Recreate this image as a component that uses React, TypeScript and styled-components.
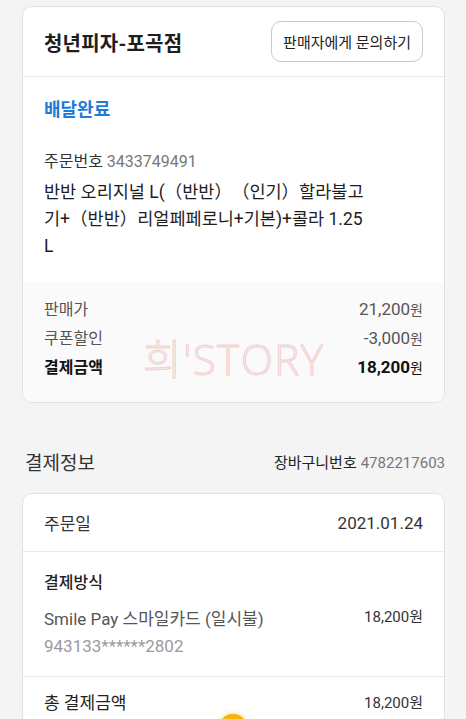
import styled, { createGlobalStyle } from 'styled-components';

const GlobalStyle = createGlobalStyle`
    html, body {
        margin: 0;
        padding: 0;
        background: #f4f4f4;
    }
    body {
        font-family: Roboto, "Noto Sans CJK KR", sans-serif;
        color: #222;
        -webkit-font-smoothing: antialiased;
    }
`;

const Page = styled.div`
    padding: 6px 21px 0 22px;
    position: relative;
    min-height: 719px;
    box-sizing: border-box;
    overflow: hidden;
`;

const Card = styled.section`
    background: #fff;
    border: 1px solid #e2e2e2;
    border-radius: 10px;
    overflow: hidden;
    position: relative;
`;

const CardHeader = styled.div`
    display: flex;
    align-items: center;
    justify-content: space-between;
    height: 69px;
    padding: 0 21px 0 21px;
    border-bottom: 1px solid #e8e8e8;
`;

const StoreName = styled.h1`
    margin: 2px 0 0;
    font-size: 20px;
    font-weight: 700;
    color: #1e1e1e;
    letter-spacing: 0.2px;
`;

const AskButton = styled.button`
    height: 41px;
    padding: 0 11px;
    background: #fff;
    border: 1px solid #c9c9c9;
    border-radius: 10px;
    font-family: inherit;
    font-size: 15px;
    color: #222;
`;

const OrderBody = styled.div`
    padding: 20px 21px 22px;
`;

const Status = styled.div`
    font-size: 18px;
    font-weight: 700;
    line-height: 26px;
    color: #1f7bd6;
`;

const OrderNo = styled.div`
    margin-top: 27px;
    font-size: 16px;
    line-height: 24px;
    color: #333;
    & span {
        color: #777;
    }
`;

const ProductName = styled.p`
    margin: 5px 0 0;
    width: 324px;
    font-size: 17.5px;
    line-height: 27px;
    color: #1e1e1e;
    word-break: break-all;
    text-spacing-trim: space-all;
`;

const PriceBox = styled.div`
    background: #fafafa;
    padding: 13px 21px 18px;
    position: relative;
`;

const PriceRow = styled.div<{ $strong?: boolean }>`
    display: flex;
    justify-content: space-between;
    align-items: baseline;
    height: ${(p) => (p.$strong ? '31px' : '29px')};
    line-height: 29px;
    font-size: 16px;
    color: ${(p) => (p.$strong ? '#111' : '#555')};
    font-weight: ${(p) => (p.$strong ? 700 : 400)};
`;

const Amount = styled.span`
    font-size: 17px;
    & small {
        font-size: 14px;
        font-weight: 400;
    }
`;

const Watermark = styled.div`
    position: absolute;
    left: 120px;
    top: 44px;
    font-size: 42px;
    font-family: "Open Sans", "Noto Sans CJK KR", sans-serif;
    font-weight: 300;
    color: rgba(250, 225, 225, 0.5);
    -webkit-text-stroke: 1px rgba(225, 150, 150, 0.4);
    letter-spacing: 1.5px;
    pointer-events: none;
`;

const SectionHead = styled.div`
    display: flex;
    justify-content: space-between;
    align-items: center;
    margin: 43px 0 17px 3px;
    height: 30px;
`;

const SectionTitle = styled.h2`
    margin: 0;
    font-size: 19px;
    font-weight: 400;
    color: #333;
`;

const CartNo = styled.div`
    font-size: 15px;
    color: #222;
    & span {
        color: #777;
        margin-left: 4px;
    }
`;

const InfoRow = styled.div`
    display: flex;
    justify-content: space-between;
    align-items: center;
    height: 57px;
    padding: 0 21px;
    font-size: 17px;
    color: #333;
    border-bottom: 1px solid #e8e8e8;
`;

const PayBlock = styled.div`
    padding: 19px 21px 17px;
    border-bottom: 1px solid #e8e8e8;
`;

const PayLabel = styled.div`
    font-size: 16px;
    font-weight: 500;
    line-height: 24px;
    color: #222;
`;

const PayLine = styled.div`
    display: flex;
    justify-content: space-between;
    align-items: baseline;
    margin-top: 11px;
    font-size: 17px;
    line-height: 26px;
    color: #555;
`;

const PayAmount = styled.span`
    font-size: 15px;
    color: #333;
    position: relative;
    top: -3px;
`;

const CardNumber = styled.div`
    font-size: 17px;
    line-height: 26px;
    color: #9a9a9a;
`;

const TotalRow = styled.div`
    display: flex;
    justify-content: space-between;
    align-items: center;
    height: 48px;
    padding: 0 21px;
    font-size: 17px;
    color: #222;
    & span {
        font-size: 15px;
        color: #333;
    }
`;

const FloatingButton = styled.div`
    position: fixed;
    left: 219px;
    top: 714px;
    width: 28px;
    height: 28px;
    border-radius: 50%;
    background: #f4b400;
    box-shadow: 0 -1px 4px rgba(240, 190, 60, 0.5);
`;

export default function App() {
    return (
        <Page>
            <GlobalStyle />
            <Card>
                <CardHeader>
                    <StoreName>청년피자-포곡점</StoreName>
                    <AskButton>판매자에게 문의하기</AskButton>
                </CardHeader>
                <OrderBody>
                    <Status>배달완료</Status>
                    <OrderNo>
                        주문번호 <span>3433749491</span>
                    </OrderNo>
                    <ProductName>
                        반반 오리지널 L(（반반）（인기）할라불고기+（반반）리얼페페로니+기본)+콜라 1.25L
                    </ProductName>
                </OrderBody>
                <PriceBox>
                    <PriceRow>
                        <span>판매가</span>
                        <Amount>
                            21,200<small>원</small>
                        </Amount>
                    </PriceRow>
                    <PriceRow>
                        <span>쿠폰할인</span>
                        <Amount>
                            -3,000<small>원</small>
                        </Amount>
                    </PriceRow>
                    <PriceRow $strong>
                        <span>결제금액</span>
                        <Amount>
                            18,200<small>원</small>
                        </Amount>
                    </PriceRow>
                    <Watermark>희'STORY</Watermark>
                </PriceBox>
            </Card>

            <SectionHead>
                <SectionTitle>결제정보</SectionTitle>
                <CartNo>
                    장바구니번호<span>4782217603</span>
                </CartNo>
            </SectionHead>

            <Card>
                <InfoRow>
                    <span>주문일</span>
                    <span>2021.01.24</span>
                </InfoRow>
                <PayBlock>
                    <PayLabel>결제방식</PayLabel>
                    <PayLine>
                        <span>Smile Pay 스마일카드 (일시불)</span>
                        <PayAmount>18,200원</PayAmount>
                    </PayLine>
                    <CardNumber>943133******2802</CardNumber>
                </PayBlock>
                <TotalRow>
                    총 결제금액
                    <span>18,200원</span>
                </TotalRow>
            </Card>
            <FloatingButton />
        </Page>
    );
}
